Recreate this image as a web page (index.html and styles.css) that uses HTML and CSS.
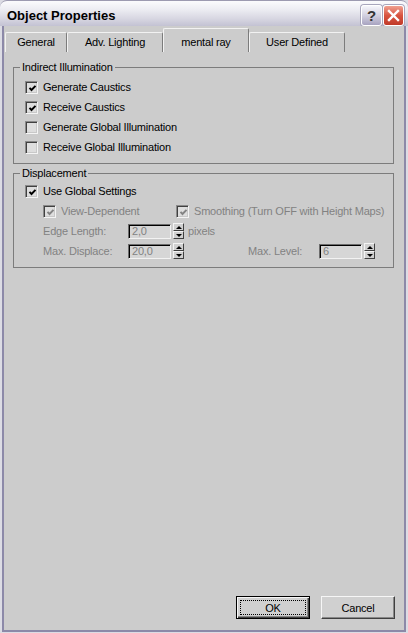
FILE: index.html
```html
<!DOCTYPE html>
<html lang="en">
<head>
    <meta charset="UTF-8">
    <title>Object Properties</title>
    <link rel="stylesheet" href="styles.css">
</head>
<body>
    <div class="window">
        <div class="titlebar">
            <span class="title">Object Properties</span>
            <div class="caption-buttons">
                <span class="cap-btn help">?</span>
                <span class="cap-btn close">
                    <svg width="13" height="13" viewBox="0 0 13 13">
                        <path d="M2 2 L11 11 M11 2 L2 11" stroke="#fff" stroke-width="2.4" stroke-linecap="square"/>
                    </svg>
                </span>
            </div>
        </div>

        <div class="frame">
            <div class="tabs">
                <div class="tab tab-general">General</div>
                <div class="tab tab-lighting">Adv. Lighting</div>
                <div class="tab tab-mental active">mental ray</div>
                <div class="tab tab-user">User Defined</div>
            </div>

            <div class="panel">
                <fieldset class="group group-indirect">
                    <legend>Indirect Illumination</legend>
                    <div class="rows">
                        <div class="row">
                            <span class="check-row">
                                <span class="box"><svg viewBox="0 0 9 9"><polyline points="1.5,3.8 3.5,6 7.5,1.8" /></svg></span>
                                Generate Caustics
                            </span>
                        </div>
                        <div class="row">
                            <span class="check-row">
                                <span class="box"><svg viewBox="0 0 9 9"><polyline points="1.5,3.8 3.5,6 7.5,1.8" /></svg></span>
                                Receive Caustics
                            </span>
                        </div>
                        <div class="row">
                            <span class="check-row"><span class="box"></span>Generate Global Illumination</span>
                        </div>
                        <div class="row">
                            <span class="check-row"><span class="box"></span>Receive Global Illumination</span>
                        </div>
                    </div>
                </fieldset>

                <fieldset class="group group-displace">
                    <legend>Displacement</legend>
                    <div class="rows">
                        <div class="row">
                            <span class="check-row">
                                <span class="box"><svg viewBox="0 0 9 9"><polyline points="1.5,3.8 3.5,6 7.5,1.8" /></svg></span>
                                Use Global Settings
                            </span>
                        </div>
                        <div class="row indent disabled">
                            <span class="check-row view-dep">
                                <span class="box"><svg viewBox="0 0 9 9"><polyline points="1.5,3.8 3.5,6 7.5,1.8" /></svg></span>
                                View-Dependent
                            </span>
                            <span class="check-row">
                                <span class="box"><svg viewBox="0 0 9 9"><polyline points="1.5,3.8 3.5,6 7.5,1.8" /></svg></span>
                                Smoothing (Turn OFF with Height Maps)
                            </span>
                        </div>
                        <div class="row indent disabled">
                            <span class="field-label">Edge Length:</span>
                            <span class="field">2,0</span>
                            <span class="spin"><span class="spin-up"></span><span class="spin-down"></span></span>
                            <span class="unit">pixels</span>
                        </div>
                        <div class="row indent disabled">
                            <span class="field-label">Max. Displace:</span>
                            <span class="field">20,0</span>
                            <span class="spin"><span class="spin-up"></span><span class="spin-down"></span></span>
                            <span class="field-label level-label">Max. Level:</span>
                            <span class="field">6</span>
                            <span class="spin"><span class="spin-up"></span><span class="spin-down"></span></span>
                        </div>
                    </div>
                </fieldset>
            </div>

            <div class="buttons">
                <button type="button" class="btn default"><span class="focus">OK</span></button>
                <button type="button" class="btn">Cancel</button>
            </div>
        </div>
    </div>
</body>
</html>
```

FILE: styles.css
```css
body {
    margin: 0;
    background-color: #e2e2ea;
    font-family: "Liberation Sans", Arial, sans-serif;
    font-size: 11px;
    letter-spacing: -0.2px;
    color: #000;
}
.window {
    width: 408px;
    height: 633px;
    display: flex;
    flex-direction: column;
    background-color: #dcdce4;
}
.titlebar {
    height: 26px;
    flex: none;
    box-sizing: border-box;
    display: flex;
    align-items: center;
    justify-content: space-between;
    padding: 3px 4px 0 7px;
    border-radius: 7px 7px 0 0;
    border-top: 1px solid #9c9ab0;
    background: linear-gradient(#fbfbfd, #ececf2 35%, #d8d7e2 70%, #c3c2d3);
}
.title {
    font-weight: bold;
    font-size: 13px;
    letter-spacing: 0;
    padding-top: 1px;
    color: #000;
}
.caption-buttons {
    display: flex;
    gap: 1px;
}
.cap-btn {
    width: 21px;
    height: 21px;
    box-sizing: border-box;
    border: 1px solid #fff;
    border-radius: 3px;
    display: flex;
    align-items: center;
    justify-content: center;
    box-shadow: 0 0 0 1px #a8a6bc;
}
.help {
    background: linear-gradient(#f6f6fb, #d2d0e0 50%, #a7a3c0);
    color: #333;
    font-size: 15px;
    font-weight: bold;
    letter-spacing: 0;
}
.close {
    background: linear-gradient(#f0a090, #d85440 50%, #c03a28);
}
.frame {
    flex: 1;
    margin: 0 2px 1px;
    border: 2px solid #8c89a8;
    border-top: none;
    background-color: #cccccc;
    display: flex;
    flex-direction: column;
}
.tabs {
    height: 26px;
    flex: none;
    display: flex;
    align-items: flex-end;
    padding-left: 1px;
}
.tab {
    height: 20px;
    box-sizing: border-box;
    padding-top: 3px;
    line-height: 13px;
    text-align: center;
    border-top: 1px solid #f2f2f2;
    border-left: 1px solid #f2f2f2;
    border-right: 1px solid #7c7c7c;
    border-radius: 2px 2px 0 0;
}
.tab.active {
    height: 24px;
    padding-top: 7px;
}
.tab-general { width: 62px; }
.tab-lighting { width: 96px; }
.tab-mental { width: 86px; }
.tab-user { width: 96px; }
.panel {
    padding: 9px 10px 0 9px;
}
.group {
    margin: 0;
    padding: 0;
    min-width: 0;
    border: 1px solid #7c7c7c;
}
.group legend {
    margin-left: 6px;
    padding: 0 2px;
    line-height: 13px;
}
.group-indirect .rows {
    padding: 3px 0 6px 11px;
}
.group-displace {
    margin-top: 3px;
}
.group-displace .rows {
    padding: 1px 0 6px 11px;
}
.row {
    height: 20px;
    display: flex;
    align-items: center;
}
.indent {
    padding-left: 18px;
}
.disabled {
    color: #828282;
}
.check-row {
    display: flex;
    align-items: center;
}
.view-dep {
    width: 133px;
}
.box {
    width: 13px;
    height: 13px;
    box-sizing: border-box;
    margin-right: 5px;
    padding: 2px;
    background-color: #dedede;
    border: 1px solid;
    border-color: #8a8a8a #f4f4f4 #f4f4f4 #8a8a8a;
    box-shadow: inset 1px 1px 0 #404040, inset -1px -1px 0 #c8c8c8;
}
.box svg {
    display: block;
    width: 9px;
    height: 9px;
    fill: none;
    stroke: #000;
    stroke-width: 1.9;
}
.disabled .box svg {
    stroke: #848484;
}
.field-label {
    width: 85px;
}
.level-label {
    width: 71px;
    margin-left: 64px;
}
.field {
    width: 43px;
    height: 15px;
    box-sizing: border-box;
    padding-left: 3px;
    line-height: 12px;
    background-color: #d6d6d6;
    border: 1px solid;
    border-color: #6c6c6c #f2f2f2 #f2f2f2 #6c6c6c;
    box-shadow: inset 1px 1px 0 #000;
}
.spin {
    width: 11px;
    height: 16px;
    margin-left: 2px;
    display: flex;
    flex-direction: column;
}
.spin-up,
.spin-down {
    flex: 1;
    box-sizing: border-box;
    border: 1px solid;
    border-color: #f4f4f4 #404040 #404040 #f4f4f4;
    background-color: #d0d0d0;
    display: flex;
    align-items: center;
    justify-content: center;
}
.spin-up::after {
    content: "";
    border-left: 3px solid transparent;
    border-right: 3px solid transparent;
    border-bottom: 3px solid #000;
}
.spin-down::after {
    content: "";
    border-left: 3px solid transparent;
    border-right: 3px solid transparent;
    border-top: 3px solid #000;
}
.unit {
    margin-left: 4px;
}
.buttons {
    margin-top: auto;
    display: flex;
    justify-content: flex-end;
    gap: 11px;
    padding: 0 9px 11px 0;
}
.btn {
    width: 74px;
    height: 23px;
    padding: 0;
    font-family: inherit;
    font-size: 11px;
    letter-spacing: -0.2px;
    color: #000;
    background-color: #d0d0d0;
    border: 1px solid;
    border-color: #f6f6f6 #404040 #404040 #f6f6f6;
    box-shadow: inset -1px -1px 0 #888;
}
.btn.default {
    border-color: #000;
    box-shadow: inset 1px 1px 0 #f6f6f6, inset -1px -1px 0 #404040, inset -2px -2px 0 #888;
    padding: 3px;
}
.focus {
    display: flex;
    align-items: center;
    justify-content: center;
    height: 100%;
    box-sizing: border-box;
    border: 1px dotted #000;
}
```
